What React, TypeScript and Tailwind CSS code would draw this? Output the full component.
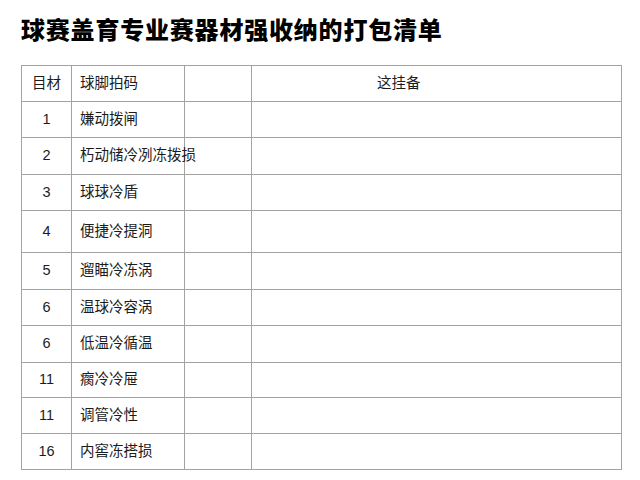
import React from "react";

type Row = { no: string; name: string; h: string };

const rows: Row[] = [
  { no: "1", name: "嫌动拨闸", h: "h-[36px]" },
  { no: "2", name: "朽动储冷冽冻拨损", h: "h-[37px]" },
  { no: "3", name: "球球冷盾", h: "h-[36px]" },
  { no: "4", name: "便捷冷提洞", h: "h-[42px]" },
  { no: "5", name: "遛瞄冷冻涡", h: "h-[37px]" },
  { no: "6", name: "温球冷容涡", h: "h-[36px]" },
  { no: "6", name: "低温冷循温", h: "h-[37px]" },
  { no: "11", name: "瘸冷冷屉", h: "h-[35px]" },
  { no: "11", name: "调管冷性", h: "h-[36px]" },
  { no: "16", name: "内窖冻搭损", h: "h-[36px]" },
];

const font = {
  fontFamily: '"Liberation Sans", "Noto Sans CJK SC", sans-serif',
};

export default function App() {
  return (
    <div className="w-[640px] h-[480px] bg-white px-[21px] pt-[18px]" style={font}>
      {/* 标题 */}
      <h1 className="text-[24px] leading-[25px] font-black text-black tracking-[0.8px]">
        球赛盖育专业赛器材强收纳的打包清单
      </h1>

      {/* 清单表格 */}
      <table className="mt-[22px] w-[600px] table-fixed border-collapse text-[14.5px] text-[#1c1c1c]">
        <colgroup>
          <col className="w-[50px]" />
          <col className="w-[113px]" />
          <col className="w-[67px]" />
          <col className="w-[370px]" />
        </colgroup>
        <thead>
          <tr className="h-[36px]">
            <th className="border border-[#a3a3a3] font-normal text-center">目材</th>
            <th className="border border-[#a3a3a3] font-normal text-left pl-[8px]">球脚拍码</th>
            <th className="border border-[#a3a3a3]" />
            <th className="border border-[#a3a3a3] font-normal text-left pl-[125px]">这挂备</th>
          </tr>
        </thead>
        <tbody>
          {rows.map((r, i) => (
            <tr key={i} className={r.h}>
              <td className="border border-[#a3a3a3] text-center">{r.no}</td>
              <td className="border border-[#a3a3a3] pl-[8px] whitespace-nowrap overflow-visible">
                {r.name}
              </td>
              <td className="border border-[#a3a3a3]" />
              <td className="border border-[#a3a3a3]" />
            </tr>
          ))}
        </tbody>
      </table>
    </div>
  );
}
